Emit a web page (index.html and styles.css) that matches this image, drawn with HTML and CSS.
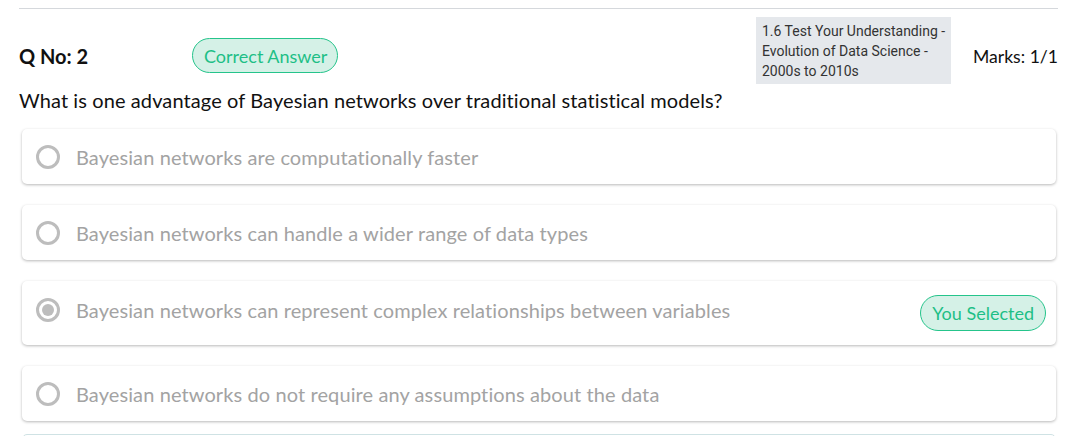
FILE: index.html
```html
<!DOCTYPE html>
<html>
<head>
<meta charset="utf-8">
<link rel="stylesheet" href="styles.css">
</head>
<body>
<div class="page">
  <div class="question">
    <div class="head">
      <div class="qno">Q No: 2</div>
      <div class="badge correct">Correct Answer</div>
      <div class="spacer"></div>
      <div class="tag">1.6 Test Your Understanding - Evolution of Data Science - 2000s to 2010s</div>
      <div class="marks">Marks: 1/1</div>
    </div>
    <div class="qtext">What is one advantage of Bayesian networks over traditional statistical models?</div>
    <div class="options">
      <div class="option"><span class="radio"></span><span class="otext">Bayesian networks are computationally faster</span></div>
      <div class="option"><span class="radio"></span><span class="otext">Bayesian networks can handle a wider range of data types</span></div>
      <div class="option tall"><span class="radio checked"></span><span class="otext">Bayesian networks can represent complex relationships between variables</span><span class="badge selected">You Selected</span></div>
      <div class="option"><span class="radio"></span><span class="otext">Bayesian networks do not require any assumptions about the data</span></div>
      <div class="option next"></div>
    </div>
  </div>
</div>
</body>
</html>
```

FILE: styles.css
```css
html, body {
  margin: 0;
  padding: 0;
  background: #fff;
  overflow: hidden;
}
body {
  font-family: Lato, "Liberation Sans", sans-serif;
  color: #1a1a1a;
}
.page {
  padding: 8px 12px 0 19px;
}
.question {
  border-top: 1px solid #d5d8dc;
}
.head {
  display: flex;
  align-items: center;
  padding-top: 8px;
}
.qno {
  font-weight: 700;
  font-size: 20px;
  width: 173px;
  color: #111;
  margin-top: 11px;
}
.badge {
  display: inline-flex;
  align-items: center;
  border-radius: 18px;
  background: #d5f1e7;
  border: 1px solid #25c48b;
  color: #1ebf86;
  font-size: 18px;
  height: 36px;
  padding: 0 11px;
  box-sizing: border-box;
  white-space: nowrap;
}
.badge.correct {
  height: 35px;
  margin-top: 10px;
  padding: 0 10px 0 11px;
}
.spacer {
  flex: 1;
}
.tag {
  font-family: Roboto, "Liberation Sans", sans-serif;
  background: #e5e8ec;
  color: #333;
  font-size: 14px;
  line-height: 20px;
  width: 195px;
  box-sizing: border-box;
  padding: 4px 2px 3px 6px;
}
.marks {
  font-size: 17.6px;
  margin-left: 22px;
  color: #111;
  margin-top: 11px;
}
.qtext {
  font-size: 20px;
  line-height: 24px;
  letter-spacing: 0.1px;
  margin-top: 4px;
  color: #111;
}
.options {
  display: flex;
  flex-direction: column;
  gap: 21px;
  margin: 17px 2px 0 3px;
}
.option {
  display: flex;
  align-items: center;
  background: #fff;
  border-radius: 5px;
  box-shadow: 0 1px 3px rgba(0, 0, 0, 0.28);
  height: 55px;
  padding: 0 10px 0 14px;
  box-sizing: border-box;
}
.option.tall {
  height: 64px;
}
.option.next {
  height: 30px;
  border: 1px solid #cfe2e4;
  box-shadow: none;
  margin-top: -8px;
}
.radio {
  width: 24px;
  height: 24px;
  border: 3px solid #bdbdbd;
  border-radius: 50%;
  box-sizing: border-box;
  flex: none;
  display: flex;
  align-items: center;
  justify-content: center;
}
.radio.checked::after {
  content: "";
  width: 12px;
  height: 12px;
  border-radius: 50%;
  background: #bdbdbd;
}
.otext {
  margin-left: 16px;
  font-size: 20px;
  letter-spacing: 0.1px;
  color: #a3a3a3;
  flex: 1;
}
.option.tall .radio {
  margin-top: -6px;
}
.option.tall .otext {
  margin-top: -6px;
}
```
